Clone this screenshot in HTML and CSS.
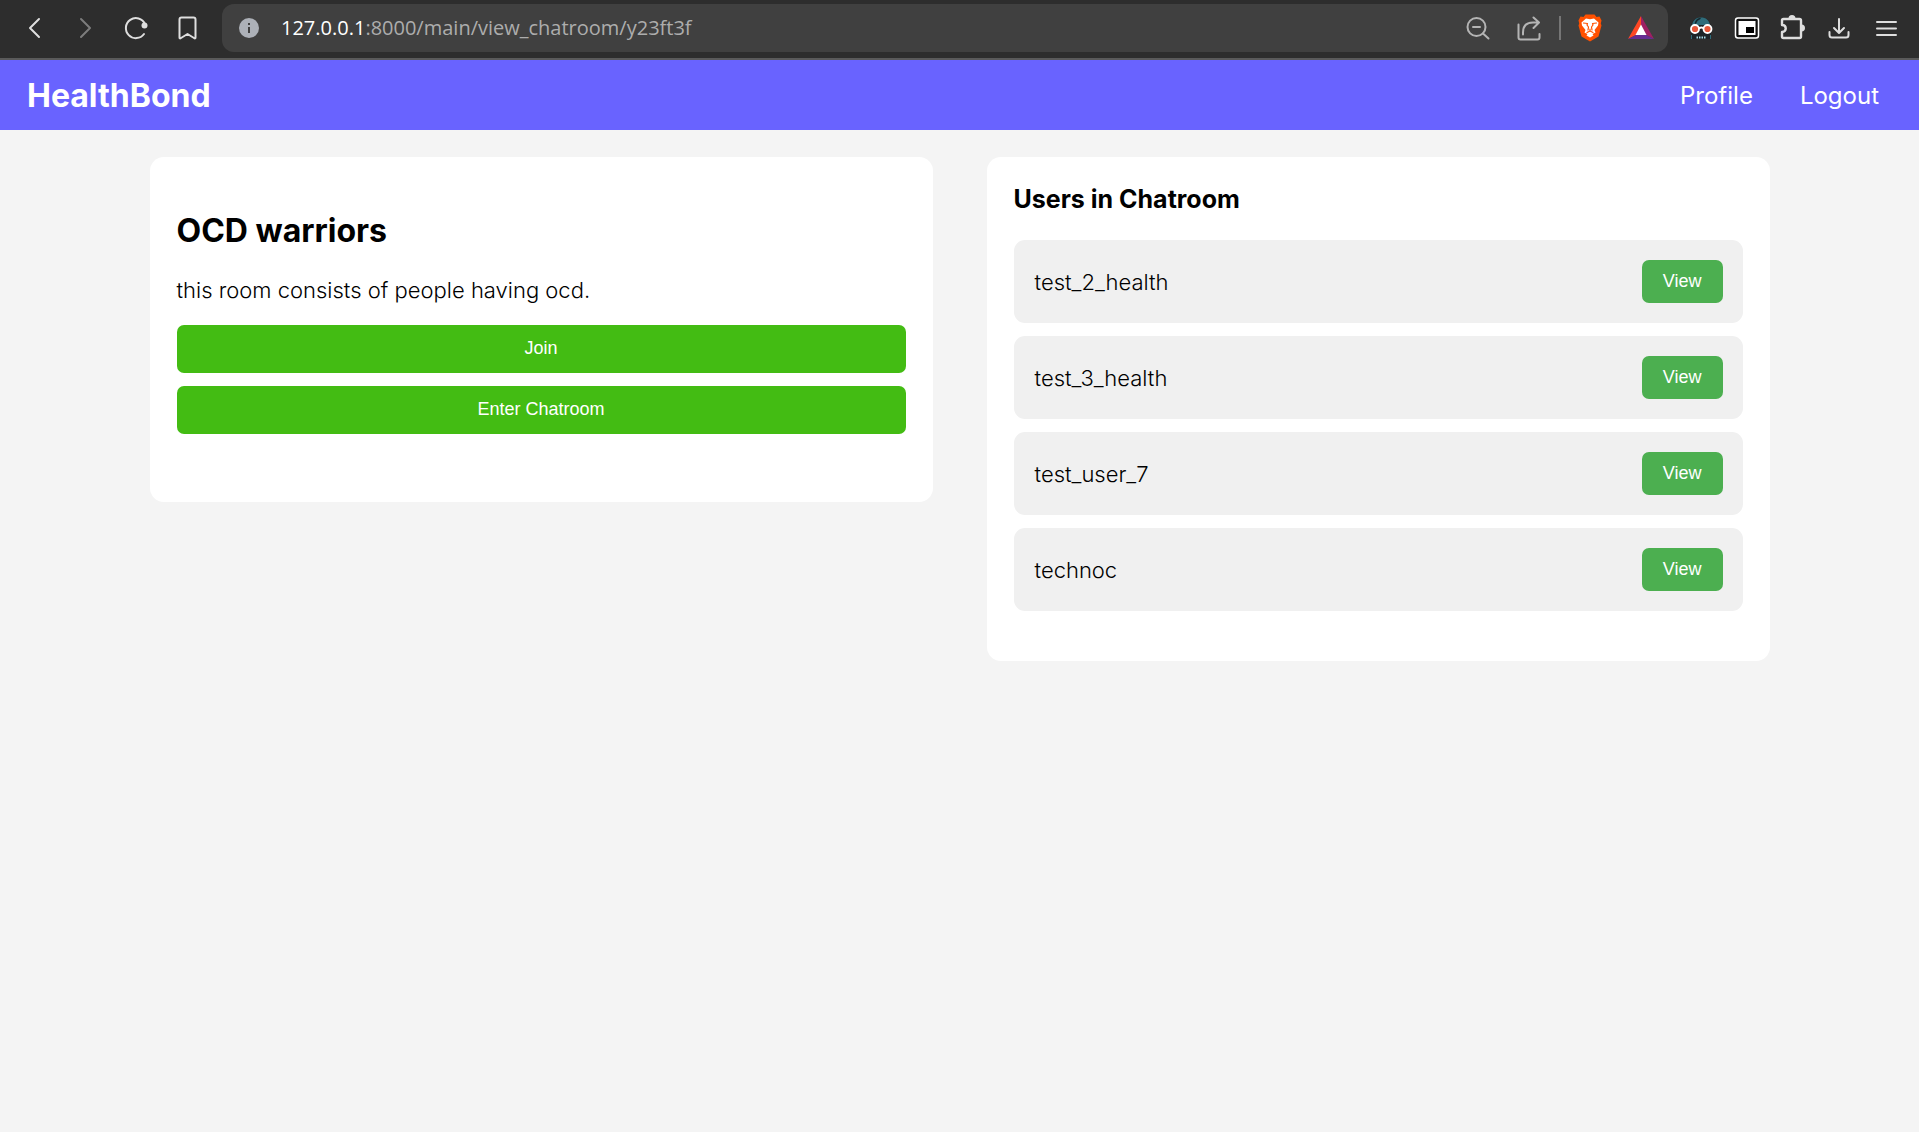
FILE: index.html
```html
<!DOCTYPE html>
<html lang="en">
<head>
<meta charset="utf-8">
<meta name="viewport" content="width=device-width, initial-scale=1">
<title>HealthBond</title>
<link rel="stylesheet" href="styles.css">
</head>
<body>
<div class="toolbar">
  <div class="toolbar-nav">
    <button class="tool" type="button" aria-label="Back"><svg width="28" height="28" viewBox="0 0 28 28"><path d="M19 5 10 14l9 9"/></svg></button>
    <button class="tool tool-off" type="button" aria-label="Forward"><svg width="28" height="28" viewBox="0 0 28 28"><path d="m10 5 9 9-9 9"/></svg></button>
    <button class="tool" type="button" aria-label="Reload"><svg width="28" height="28" viewBox="0 0 28 28"><path d="M22 20a10 10 0 1 1 1-10"/><circle class="solid" cx="22.500" cy="11.500" r="3"/></svg></button>
    <button class="tool" type="button" aria-label="Bookmark"><svg width="28" height="28" viewBox="0 0 28 28"><path d="M6.500 5.500q0-2 2-2h12q2 0 2 2v18q0 1.500-1.500.500l-6.500-4-6.500 4q-1.500 1-1.500-.500z"/></svg></button>
  </div>
  <div class="address">
    <button class="tool" type="button" aria-label="Site information"><svg width="20" height="20" viewBox="0 0 20 20"><circle cx="10" cy="10" r="10" fill="#adb1b8" stroke="none"/><path d="M9 5h2v2H9zM9 9h2v6H9z" fill="#404040" stroke="none"/></svg></button>
    <div class="url"><span class="host">127.0.0.1</span>:8000/main/view_chatroom/y23ft3f</div>
    <div class="address-tools">
      <button class="tool tool-dim" type="button" aria-label="Zoom"><svg width="28" height="28" viewBox="0 0 28 28"><circle cx="12.500" cy="13" r="9"/><path d="M9 13h7M19 19.500l5.500 5"/></svg></button>
      <button class="tool tool-dim" type="button" aria-label="Share"><svg width="28" height="28" viewBox="0 0 28 28"><path d="M3.500 10.500v13q0 2 2 2h17q2 0 2-2v-3.500M8 20.500v-2q0-10 10-10h5M18.500 3.500l5.500 5-5.500 5.500"/></svg></button>
    </div>
    <span class="divider"></span>
    <div class="address-tools">
      <button class="tool" type="button" aria-label="Shields"><svg width="28" height="28" viewBox="0 0 28 28"><path d="M9.500.500h9l2 2.500 3-.500 2 4-.700 3 .700 2-3 11L14 27.500 5.500 22.500l-3-11 .700-2-.700-3 2-4 3 .500z" fill="#ff5000" stroke="none"/><path d="m10 4.500 4 .700 4-.700 4.500 4-.500 3-3.500 4.500 1 2.500-3 1.500 1 1.500L14 23.500 10.500 21.500l1-1.500-3-1.500 1-2.500L6 11.500l-.500-3z" fill="#fff" stroke="none"/><path d="m7.500 9 4 .500-.500 1.500 1.500 2-.500 3M20.500 9l-4 .500.500 1.500-1.500 2 .500 3M11 18.500l3-1.500 3 1.500M14 17v-2" fill="none" stroke="#ff5000" stroke-width="1.200"/></svg></button>
      <button class="tool" type="button" aria-label="Rewards"><svg width="28" height="28" viewBox="0 0 28 28"><path d="M14 2v10l-5 9-8 4z" fill="#ff4724" stroke="none"/><path d="M14 2v10l5 9 8 4z" fill="#9e1f63" stroke="none"/><path d="m1 25 8-4h10l8 4z" fill="#662d91" stroke="none"/><path d="m14 10.500 5.500 10.500h-11z" fill="#fff" stroke="none"/></svg></button>
    </div>
  </div>
  <div class="toolbar-ext">
    <button class="tool" type="button" aria-label="Goggles extension"><svg width="28" height="28" viewBox="0 0 28 28"><path d="M4 25V15C4 7 8 3.500 14 3.500S24 7 24 15v10z" fill="#1d2428" stroke="none"/><path d="M5 11c1-5 4-7.500 9-7.500s8 2.500 9 7.500z" fill="#2f6c7a" stroke="none"/><path d="M8.500 9q1-3.500 4.500-4.500" stroke="#16282e" stroke-width="1.500"/><circle cx="8" cy="15" r="4" fill="#e8583a" stroke="#fff" stroke-width="1.800"/><circle cx="20.500" cy="15" r="4" fill="#e8583a" stroke="#fff" stroke-width="1.800"/><path d="M12.500 14q2-1 3.500 0" stroke="#fff"/><path d="M9.500 23.500h9.500" stroke="#a9dbe8" stroke-width="2" stroke-linecap="butt" stroke-dasharray="1.500 1"/><path d="M4.500 21v4M23.500 21v4" stroke="#2f6c7a" stroke-width="1" stroke-linecap="butt"/></svg></button>
    <button class="tool" type="button" aria-label="Picture in picture"><svg width="28" height="28" viewBox="0 0 28 28"><rect x="2.500" y="4" width="23" height="20" rx="2.500" fill="#111" stroke="#fff" stroke-width="1.500"/><rect x="5.500" y="7" width="17" height="14" fill="#fff" stroke="none"/><path d="M13 13h8v6h-8z" fill="#000" stroke="none"/></svg></button>
    <button class="tool" type="button" aria-label="Extensions"><svg width="28" height="28" viewBox="0 0 28 28"><path d="M4.500 5h16q1.500 0 1.500 1.500v16q0 1.500-1.500 1.500h-16q-1.500 0-1.500-1.500v-4.500c5 0 5-7 0-7V6.500q0-1.500 1.500-1.500z" stroke-width="2.400"/><path class="solid" d="M9.500 4.500a3.500 3.500 0 0 1 7 0zM22.500 10.500a3.500 3.500 0 0 1 0 7z"/></svg></button>
    <button class="tool" type="button" aria-label="Downloads"><svg width="28" height="28" viewBox="0 0 28 28"><path d="M14 5v13.500M9 14l5 5 5-5M4.500 18v3q0 2.500 2.500 2.500h14q2.500 0 2.500-2.500v-3"/></svg></button>
    <button class="tool" type="button" aria-label="Menu"><svg width="28" height="28" viewBox="0 0 28 28"><path d="M6 8h19M6 14.500h19M6 21h19"/></svg></button>
  </div>
</div>
<header class="navbar">
  <a class="brand" href="#">HealthBond</a>
  <nav class="links"><a href="#">Profile</a><a href="#">Logout</a></nav>
</header>
<main class="content">
  <section class="card room">
    <h2>OCD warriors</h2>
    <p>this room consists of people having ocd.</p>
    <div class="actions">
      <button class="action" type="button">Join</button>
      <button class="action" type="button">Enter Chatroom</button>
    </div>
  </section>
  <section class="card members">
    <h3>Users in Chatroom</h3>
    <ul class="users">
      <li><span>test_2_health</span><button class="view" type="button">View</button></li>
      <li><span>test_3_health</span><button class="view" type="button">View</button></li>
      <li><span>test_user_7</span><button class="view" type="button">View</button></li>
      <li><span>technoc</span><button class="view" type="button">View</button></li>
    </ul>
  </section>
</main>
</body>
</html>
```

FILE: styles.css
```css
* { box-sizing: border-box; }

body {
  margin: 0;
  background: #f4f4f4;
  color: #000;
  font: 300 22px/28px Inter, "Liberation Sans", sans-serif;
}

a { color: inherit; text-decoration: none; }
button { font: 18px/20px "Liberation Sans", Arial, sans-serif; border: 0; cursor: pointer; }

/* Browser bar */
.toolbar {
  display: flex;
  align-items: center;
  height: 60px;
  padding: 0 20px 2px 20px;
  background: #2d2d2d;
  border-bottom: 2px solid #5a5a5a;
}
.tool { display: flex; padding: 0; background: none; color: #dedede; }
.tool svg { display: block; fill: none; stroke: currentColor; stroke-width: 2; stroke-linecap: round; stroke-linejoin: round; }
.tool .solid { fill: currentColor; stroke: none; }
.tool-off { color: #7c7c7c; }
.tool-dim { color: #b4b4b4; }
.toolbar-nav { display: flex; gap: 23px; margin-right: 21px; }
.address {
  display: flex;
  align-items: center;
  flex: 1;
  height: 48px;
  padding: 0 13px 0 17px;
  border-radius: 12px;
  background: #404040;
}
.url { flex: 1; margin-left: 22px; color: #adadad; font: 400 20px/28px "Open Sans", "Noto Sans", sans-serif; }
.host { color: #fff; }
.address-tools { display: flex; gap: 23px; }
.divider { width: 2px; height: 24px; margin: 0 15px 0 16px; background: #767676; }
.toolbar-ext { display: flex; gap: 18px; margin-left: 19px; }

/* Site header */
.navbar {
  display: flex;
  align-items: center;
  justify-content: space-between;
  height: 70px;
  padding: 2px 40px 0 27px;
  background: #6963ff;
  color: #fff;
}
.brand { font-size: 32px; font-weight: 700; }
.links { display: flex; gap: 47px; font-size: 24px; font-weight: 400; }

/* Room page */
.content {
  display: flex;
  align-items: flex-start;
  gap: 54px;
  max-width: 1620px;
  margin: 27px auto;
}
.card { flex: 1; padding: 27px; border-radius: 14px; background: #fff; }
h2, h3, p { margin: 0; }
h2 { font-size: 32px; line-height: 40px; font-weight: 700; }
h3 { font-size: 25px; line-height: 30px; font-weight: 700; }
.room { padding-top: 54px; padding-bottom: 68px; }
.room p { margin: 25px 0 21px; }
.actions { display: flex; flex-direction: column; gap: 13px; }
.action { height: 48px; padding: 0 0 2px; border-radius: 7px; background: #43bc13; color: #fff; }
.users { display: flex; flex-direction: column; gap: 13px; margin: 26px 0 23px; padding: 0; list-style: none; }
.users li {
  display: flex;
  align-items: center;
  justify-content: space-between;
  padding: 20px 20px 20px 21px;
  border-radius: 11px;
  background: #f0f0f0;
}
.view { padding: 11px 21px 12px; border-radius: 7px; background: #4caf50; color: #fff; }
```
